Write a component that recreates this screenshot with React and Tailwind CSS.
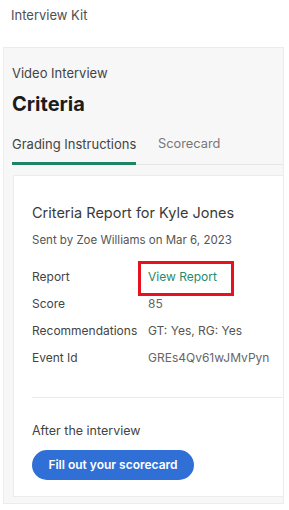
export default function App() {
  return (
    <div className="w-[289px] h-[510px] bg-white overflow-hidden font-['Inter',sans-serif] text-[#3d3d3d]">
      <div className="h-[47px] pl-[11px] pt-[6px] text-[13px] text-[#505050]">Interview Kit</div>
      <div className="ml-[3px] mr-[5px] h-[457px] bg-[#f7f7f7] border border-[#ececec] pl-[8px]">
        <div className="pt-[17px] text-[13px] text-[#444] leading-[16px]">Video Interview</div>
        <div className="mt-[11px] text-[20px] font-bold text-[#1c1c1c] leading-[24px]">Criteria</div>
        <div className="mt-[20px] flex border-b border-[#e6e6e6]">
          <div className="w-[124px] pb-[10px] border-b-[3px] border-[#1d8466] text-[13px] text-[#444] leading-[16px] -mb-[1px] whitespace-nowrap">
            Grading Instructions
          </div>
          <div className="ml-[22px] text-[12.8px] text-[#777] leading-[16px]">Scorecard</div>
        </div>
        <div className="mt-[10px] ml-[1px] h-[322px] bg-white border border-[#ececec] border-r-0 pl-[18px] pt-[27px]">
          <div className="text-[14.5px] text-[#3a3a3a] leading-[20px]">Criteria Report for Kyle Jones</div>
          <div className="mt-[10px] text-[11.5px] text-[#555] leading-[14px]">Sent by Zoe Williams on Mar 6, 2023</div>
          <div className="mt-[22px] grid grid-cols-[116px_1fr] gap-y-[11px] text-[12px] leading-[16px] text-[#444]">
            <div>Report</div>
            <div>
              <span className="relative inline-block text-[#2a8a6d]">
                View Report
                <span className="absolute left-[-10px] top-[-8px] w-[96px] h-[35px] border-[3px] border-[#e5121f]"></span>
              </span>
            </div>
            <div>Score</div>
            <div className="text-[#666]">85</div>
            <div>Recommendations</div>
            <div className="text-[#555]">GT: Yes, RG: Yes</div>
            <div>Event Id</div>
            <div className="text-[#666]">GREs4Qv61wJMvPyn</div>
          </div>
          <div className="mt-[31px] border-t border-[#ebebeb]"></div>
          <div className="mt-[25px] text-[12.5px] text-[#444] leading-[16px]">After the interview</div>
          <button className="mt-[11px] w-[162px] h-[30px] rounded-full bg-[#2f6fd6] text-white text-[12px] font-semibold">
            Fill out your scorecard
          </button>
        </div>
      </div>
    </div>
  );
}
